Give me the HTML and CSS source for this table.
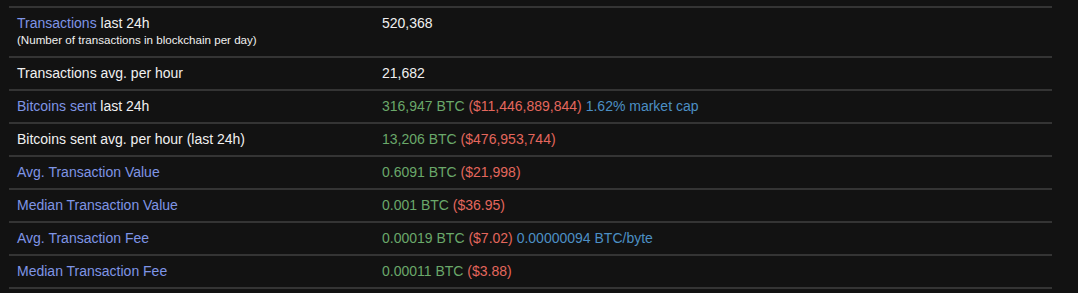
FILE: index.html
```html
<!DOCTYPE html>
<html lang="en">
<head>
    <meta charset="UTF-8">
    <title>Bitcoin Stats</title>
    <link rel="stylesheet" href="styles.css">
</head>
<body>
    <table class="stats">
        <tr>
            <td class="label"><a href="#">Transactions</a> last 24h<br><small>(Number of transactions in blockchain per day)</small></td>
            <td>520,368</td>
        </tr>
        <tr>
            <td class="label">Transactions avg. per hour</td>
            <td>21,682</td>
        </tr>
        <tr>
            <td class="label"><a href="#">Bitcoins sent</a> last 24h</td>
            <td><span class="btc">316,947 BTC</span> <span class="usd">($11,446,889,844)</span> <span class="extra">1.62% market cap</span></td>
        </tr>
        <tr>
            <td class="label">Bitcoins sent avg. per hour (last 24h)</td>
            <td><span class="btc">13,206 BTC</span> <span class="usd">($476,953,744)</span></td>
        </tr>
        <tr>
            <td class="label"><a href="#">Avg. Transaction Value</a></td>
            <td><span class="btc">0.6091 BTC</span> <span class="usd">($21,998)</span></td>
        </tr>
        <tr>
            <td class="label"><a href="#">Median Transaction Value</a></td>
            <td><span class="btc">0.001 BTC</span> <span class="usd">($36.95)</span></td>
        </tr>
        <tr>
            <td class="label"><a href="#">Avg. Transaction Fee</a></td>
            <td><span class="btc">0.00019 BTC</span> <span class="usd">($7.02)</span> <span class="extra">0.00000094 BTC/byte</span></td>
        </tr>
        <tr>
            <td class="label"><a href="#">Median Transaction Fee</a></td>
            <td><span class="btc">0.00011 BTC</span> <span class="usd">($3.88)</span></td>
        </tr>
    </table>
</body>
</html>
```

FILE: styles.css
```css
body {
    margin: 0;
    padding: 6px 0 0 9px;
    background-color: #121212;
    color: #f0f0f0;
    font-family: "Liberation Sans", Arial, sans-serif;
    font-size: 14px;
}
.stats {
    width: 1043px;
    border-collapse: collapse;
    border-bottom: 2px solid #343434;
}
.stats td {
    border-top: 2px solid #343434;
    padding: 7px 8px 8px;
    line-height: 16px;
    vertical-align: top;
}
.stats .label {
    width: 349px;
}
.stats small {
    display: inline-block;
    font-size: 11.6px;
    line-height: 17px;
}
.stats a {
    color: #7f95e6;
    text-decoration: none;
}
.btc {
    color: #6aa86a;
}
.usd {
    color: #e4675d;
}
.extra {
    color: #4c8fc4;
}
```
